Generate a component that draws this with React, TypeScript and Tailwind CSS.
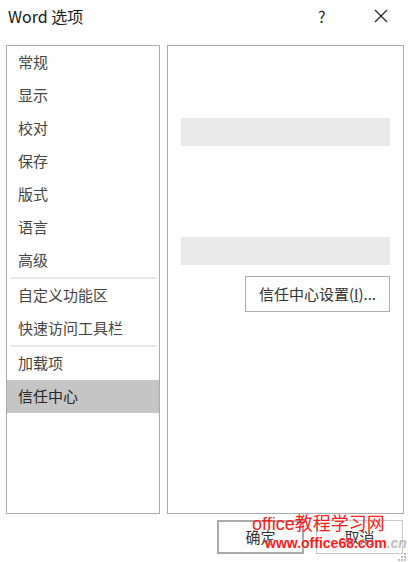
import React from 'react';

const groups = [
  ['常规', '显示', '校对', '保存', '版式', '语言', '高级'],
  ['自定义功能区', '快速访问工具栏'],
  ['加载项', '信任中心'],
];

const selected = '信任中心';

export default function App() {
  return (
    <div className="relative w-[408px] h-[562px] bg-white overflow-hidden text-[#262626] font-['Noto_Sans_CJK_SC','Noto_Sans',sans-serif]">
      {/* Title bar */}
      <div className="flex items-center h-[45px] pl-[8px] pb-[13px]">
        <span className="text-[16px] text-[#1a1a1a] flex-1">Word 选项</span>
        <span className="w-[10px] text-[16px] text-[#222] mr-[46px]">?</span>
        <svg width="14" height="14" viewBox="0 0 14 14" className="mr-[20px]">
          <path d="M1 1 L13 13 M13 1 L1 13" stroke="#222" strokeWidth="1.2" fill="none" />
        </svg>
      </div>

      {/* Panels */}
      <div className="flex gap-[7px] pl-[6px] pr-[4px] h-[469px]">
        <div className="w-[154px] border border-[#ababab]">
          {groups.map((items, gi) => (
            <div key={gi}>
              {gi > 0 && <div className="mx-[3px] h-[2px] bg-[#e6e6e6]" />}
              {items.map((item) => (
                <div
                  key={item}
                  className={`h-[33px] flex items-center pl-[11px] text-[15px] text-[#444] ${
                    item === selected ? 'bg-[#c5c5c5] text-[#262626]' : ''
                  }`}
                >
                  {item}
                </div>
              ))}
            </div>
          ))}
        </div>

        <div className="flex-1 border border-[#ababab] px-[13px]">
          <div className="h-[28px] bg-[#e8e8e8] mt-[72px]" />
          <div className="h-[28px] bg-[#e8e8e8] mt-[91px]" />
          <div className="flex justify-end mt-[11px]">
            <div className="w-[145px] h-[36px] border border-[#ababab] bg-[#fdfdfd] flex items-center justify-center text-[15px] text-[#333]">
              信任中心设置(<span className="underline">I</span>)...
            </div>
          </div>
        </div>
      </div>

      {/* Footer buttons */}
      <div className="flex justify-end gap-[12px] pr-[5px] mt-[6px]">
        <div className="w-[87px] h-[34px] border-2 border-[#a9a9a9] bg-[#fdfdfd] flex items-center justify-center text-[15px] text-[#333]">
          确定
        </div>
        <div className="w-[87px] h-[34px] border border-[#c8c8c8] bg-[#fdfdfd] flex items-center justify-center text-[15px] text-[#333]">
          取消
        </div>
      </div>

      {/* resize grip */}
      <div className="absolute right-[2px] bottom-[1px] grid grid-cols-3 gap-[1px] w-[8px]">
        <span />
        <span />
        <span className="w-[2px] h-[2px] bg-[#bbb]" />
        <span />
        <span className="w-[2px] h-[2px] bg-[#bbb]" />
        <span className="w-[2px] h-[2px] bg-[#bbb]" />
        <span className="w-[2px] h-[2px] bg-[#bbb]" />
        <span className="w-[2px] h-[2px] bg-[#bbb]" />
        <span className="w-[2px] h-[2px] bg-[#bbb]" />
      </div>

      {/* watermark */}
      <div className="absolute left-[252px] top-[514px] text-[18px] leading-[20px] text-[#ff1a1a] font-['Liberation_Sans','Noto_Sans_CJK_SC',sans-serif]">
        office教程学习网
      </div>
      <div className="absolute left-[265px] top-[535px] text-[14px] leading-[17px] font-bold font-['Liberation_Sans',sans-serif] [text-shadow:0_0_2px_#fff]">
        <span className="text-[#ff1a1a]">www.office68.com</span>
        <span className="text-[#bdbdbd] italic">.cn</span>
      </div>
    </div>
  );
}
